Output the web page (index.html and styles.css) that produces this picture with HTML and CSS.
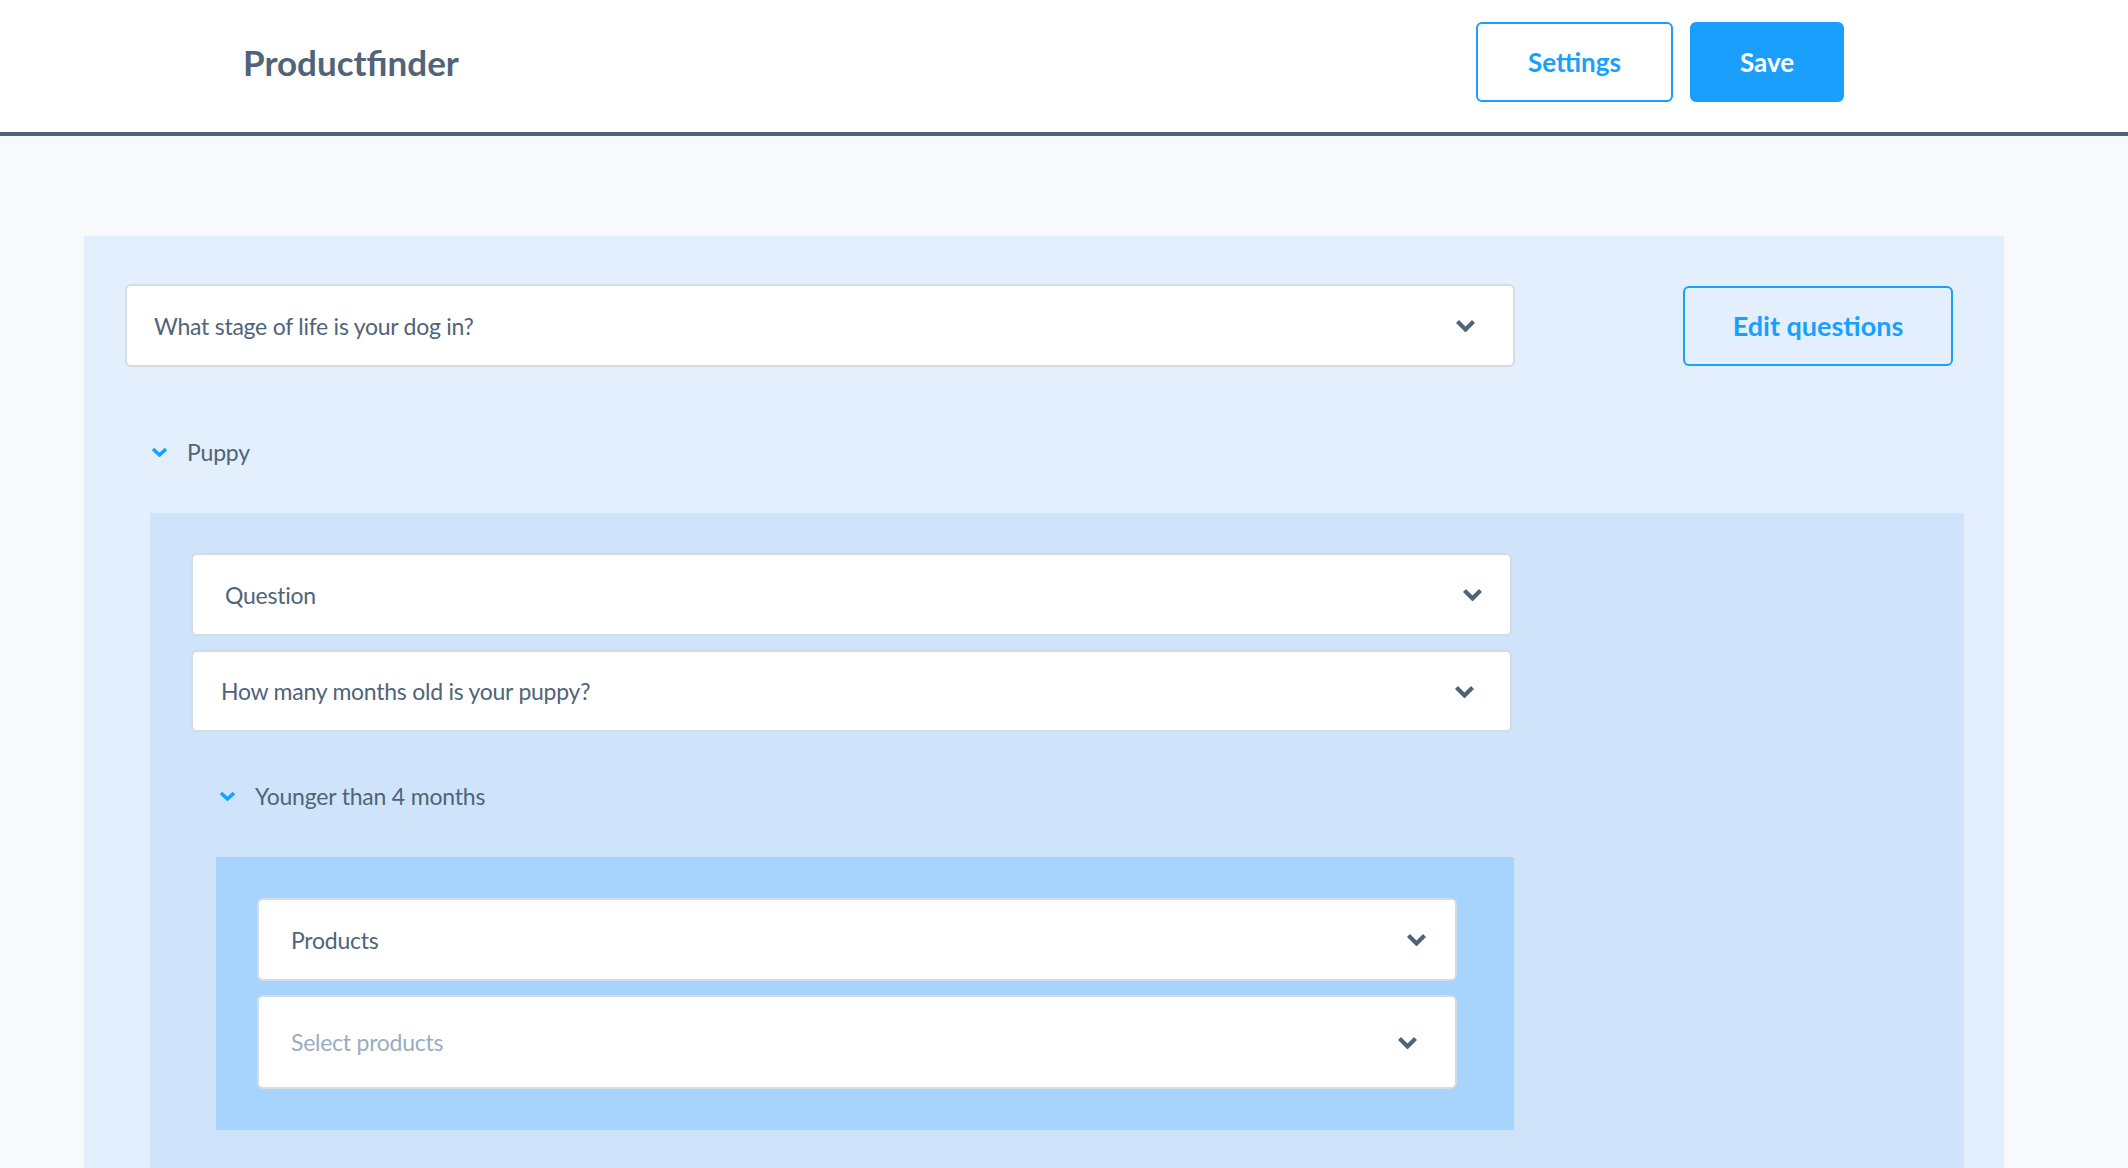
FILE: index.html
```html
<!DOCTYPE html>
<html lang="en">
<head>
<meta charset="utf-8">
<title>Productfinder</title>
<link rel="stylesheet" href="styles.css">
</head>
<body>
<header class="topbar">
  <h1 class="title">Productfinder</h1>
  <div class="actions">
    <button class="btn btn-outline btn-settings">Settings</button>
    <button class="btn btn-primary">Save</button>
  </div>
</header>
<main class="main">
  <section class="panel panel-l1">
    <div class="question-row">
      <div class="select select-l1">
        <span>What stage of life is your dog in?</span>
        <svg class="chev" viewBox="0 0 21 13"><polyline points="2.5,2.5 10.5,10.5 18.5,2.5"/></svg>
      </div>
      <button class="btn btn-outline btn-edit">Edit questions</button>
    </div>
    <div class="answer answer-l1">
      <svg class="chev-blue" viewBox="0 0 17 10"><polyline points="2,2 8.5,8 15,2"/></svg>
      <span>Puppy</span>
    </div>
    <div class="panel panel-l2">
      <div class="select select-l2 select-type">
        <span>Question</span>
        <svg class="chev" viewBox="0 0 21 13"><polyline points="2.5,2.5 10.5,10.5 18.5,2.5"/></svg>
      </div>
      <div class="select select-l2 select-text">
        <span>How many months old is your puppy?</span>
        <svg class="chev" viewBox="0 0 21 13"><polyline points="2.5,2.5 10.5,10.5 18.5,2.5"/></svg>
      </div>
      <div class="answer answer-l2">
        <svg class="chev-blue" viewBox="0 0 17 10"><polyline points="2,2 8.5,8 15,2"/></svg>
        <span>Younger than 4 months</span>
      </div>
      <div class="panel panel-l3">
        <div class="select select-l3 select-type">
          <span>Products</span>
          <svg class="chev" viewBox="0 0 21 13"><polyline points="2.5,2.5 10.5,10.5 18.5,2.5"/></svg>
        </div>
        <div class="select select-l3 select-multi">
          <span class="placeholder">Select products</span>
          <svg class="chev" viewBox="0 0 21 13"><polyline points="2.5,2.5 10.5,10.5 18.5,2.5"/></svg>
        </div>
      </div>
    </div>
  </section>
</main>
</body>
</html>
```

FILE: styles.css
```css
* { box-sizing: border-box; }

body {
  margin: 0;
  background: #f7f9fb;
  font-family: Lato, "Noto Sans", sans-serif;
  color: #4f6479;
}

.topbar {
  height: 136px;
  background: #ffffff;
  border-bottom: 4px solid #4f6479;
  display: flex;
  align-items: flex-start;
  padding: 22px 284px 0 243px;
}

.title {
  margin: 0;
  font-size: 35px;
  font-weight: 700;
  line-height: 80px;
  color: #4f6479;
}

.actions {
  margin-left: auto;
  display: flex;
  gap: 17px;
}

.btn {
  height: 80px;
  border-radius: 6px;
  border: 2px solid #1a9fff;
  font-family: inherit;
  font-size: 26px;
  font-weight: 700;
  padding: 0;
  cursor: pointer;
}

.btn-outline {
  background: #ffffff;
  color: #1a9fff;
}

.btn-settings { width: 197px; }

.btn-primary {
  width: 154px;
  background: #1a9fff;
  color: #ffffff;
}

.main {
  padding-top: 100px;
}

.panel-l1 {
  margin-left: 84px;
  width: 1920px;
  background: #e3effc;
  padding: 48px 0 0 41px;
}

.question-row {
  display: flex;
  align-items: center;
}

.select {
  display: flex;
  align-items: center;
  justify-content: space-between;
  background: #ffffff;
  border: 2px solid #d3dbe3;
  border-radius: 6px;
  height: 83px;
  font-size: 23px;
  letter-spacing: -0.25px;
  color: #4f6479;
}

.chev {
  width: 21px;
  height: 13px;
  flex: none;
}

.chev polyline {
  fill: none;
  stroke: #4f6479;
  stroke-width: 4.2;
}

.chev-blue {
  width: 17px;
  height: 10px;
  flex: none;
}

.chev-blue polyline {
  fill: none;
  stroke: #1a9fff;
  stroke-width: 3.5;
}

.select-l1 {
  width: 1390px;
  padding: 0 37px 0 27px;
}

.btn-edit {
  margin-left: 168px;
  width: 270px;
  background: transparent;
  font-size: 27px;
}

.answer {
  display: flex;
  align-items: center;
  height: 40px;
  gap: 19px;
  font-size: 23px;
  letter-spacing: -0.2px;
}

.answer-l1 {
  margin: 65px 0 41px;
  padding-left: 26px;
}

.answer-l2 {
  margin: 44px 0 41px;
  padding-left: 28px;
}

.panel-l2 {
  margin-left: 25px;
  width: 1814px;
  background: #cfe4fa;
  padding: 40px 0 41px 41px;
}

.select-l2 {
  width: 1321px;
}

.select-l2.select-type {
  padding: 0 27px 0 32px;
}

.select-l2.select-text {
  margin-top: 14px;
  height: 82px;
  padding: 0 35px 0 28px;
}

.panel-l3 {
  margin-left: 25px;
  width: 1298px;
  background: #a6d4fc;
  padding: 41px 0 41px 41px;
}

.select-l3 {
  width: 1200px;
}

.select-l3.select-type {
  padding: 0 28px 0 32px;
}

.select-multi {
  margin-top: 14px;
  height: 94px;
  padding: 0 37px 0 32px;
}

.placeholder {
  color: #9aacbf;
}
```
